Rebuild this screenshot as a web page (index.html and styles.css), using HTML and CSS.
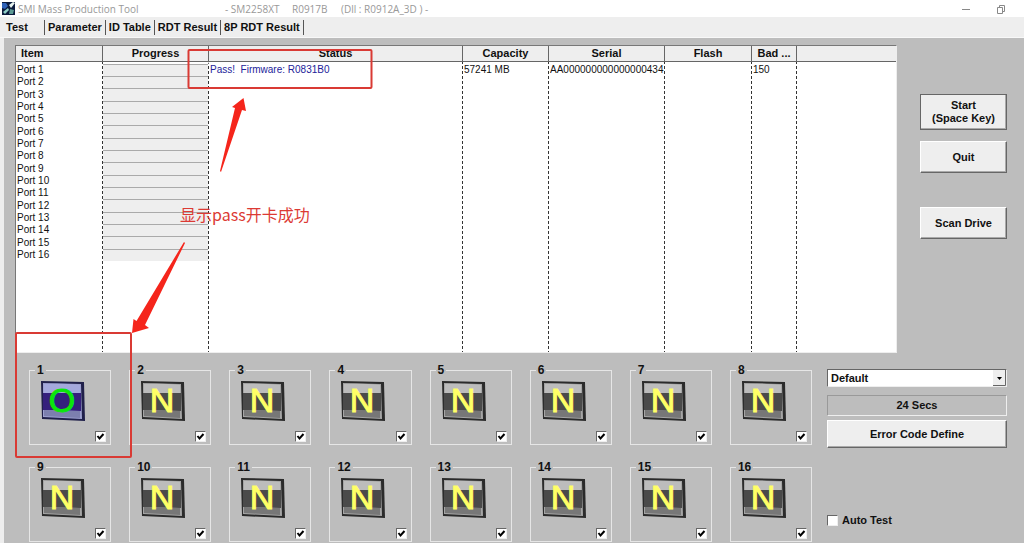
FILE: index.html
```html
<!DOCTYPE html>
<html lang="en">
<head>
    <meta charset="UTF-8">
    <meta name="viewport" content="width=device-width, initial-scale=1.0">
    <title>SMI Mass Production Tool</title>
    <link rel="stylesheet" href="styles.css">
</head>
<body>
    <div class="titlebar">
        <svg class="app-icon" viewBox="0 0 13 13">
            <rect width="13" height="13" fill="#0b1a3c"/>
            <path d="M0 1h4l2 3-3 3-3-1z" fill="#2f62b8"/>
            <path d="M7 3l4-3 2 1-4 5z" fill="#e8f4f0"/>
            <path d="M1 10l5-4 1 2-4 4z" fill="#8fd0c8"/>
            <path d="M8 7l4 1-1 4-4 0z" fill="#5c9a94"/>
        </svg>
        <span class="app-name">SMI Mass Production Tool</span>
        <span class="chip">- SM2258XT</span>
        <span class="version">R0917B</span>
        <span class="dll">(Dll : R0912A_3D ) -</span>
        <svg class="window-icons" viewBox="0 0 44 10" fill="none" stroke="#888">
            <path d="M0 5.500h8"/>
            <path d="M35.500 3.500h5v6h-5zM37.500 3.500v-2h5v6h-2"/>
        </svg>
    </div>

    <nav class="tabs">
        <button class="tab active">Test</button>
        <button class="tab">Parameter</button>
        <button class="tab">ID Table</button>
        <button class="tab">RDT Result</button>
        <button class="tab">8P RDT Result</button>
    </nav>

    <main class="panel">
        <div class="top">
            <div class="list">
                <table class="ports">
                    <colgroup>
                        <col class="col-item">
                        <col class="col-progress">
                        <col class="col-status">
                        <col class="col-capacity">
                        <col class="col-serial">
                        <col class="col-flash">
                        <col class="col-bad">
                        <col class="col-rest">
                    </colgroup>
                    <thead>
                        <tr>
                            <th class="first">Item</th>
                            <th>Progress</th>
                            <th>Status</th>
                            <th>Capacity</th>
                            <th>Serial</th>
                            <th>Flash</th>
                            <th>Bad ...</th>
                            <th></th>
                        </tr>
                    </thead>
                    <tbody id="ports"></tbody>
                </table>
            </div>
            <div class="actions">
                <button class="btn btn-start">Start<br>(Space Key)</button>
                <button class="btn btn-quit">Quit</button>
                <button class="btn">Scan Drive</button>
            </div>
        </div>

        <div class="bottom">
            <div class="slots" id="slots"></div>
            <div class="controls">
                <select class="config" aria-label="Config">
                    <option>Default</option>
                </select>
                <div class="timer">24 Secs</div>
                <button class="btn btn-error">Error Code Define</button>
                <label class="auto"><input type="checkbox" class="check"> Auto Test</label>
            </div>
        </div>
    </main>

    <svg class="marks" width="400" height="470">
        <g fill="none" stroke="#d93a34" stroke-width="2">
            <rect x="188.500" y="50" width="183" height="38" rx="1"/>
            <rect x="16" y="333" width="115" height="124" rx="1"/>
        </g>
        <g fill="#f5251b">
            <path d="M243.500 98l2.500 13-4-1-21 62-1-1 15-63-3-1z"/>
            <path d="M132 333l1.500-14 3 2 47.500-79 1 1-40 82 4 3z"/>
        </g>
    </svg>
    <div class="note">显示pass开卡成功</div>

    <script>
        // ports list
        const first = ['Pass!&nbsp; Firmware: R0831B0', '57241 MB', 'AA000000000000000434', '', '150', ''];
        let rows = '';
        for (let i = 1; i <= 16; i++) {
            rows += `<tr><td>Port ${i}</td><td class="progress"></td>`;
            for (let c = 0; c < 6; c++) {
                rows += `<td${c === 0 ? ' class="status"' : ''}>${i === 1 ? first[c] : ''}</td>`;
            }
            rows += '</tr>';
        }
        // empty row takes the rest of the height
        rows += `<tr class="filler">${'<td></td>'.repeat(8)}</tr>`;
        document.getElementById('ports').innerHTML = rows;

        // drive slots
        let slots = '';
        for (let i = 1; i <= 16; i++) {
            const state = i === 1 ? 'O' : 'N';
            slots += `
                <fieldset class="slot ${i === 1 ? 'pass' : ''}">
                    <legend>${i}</legend>
                    <label for="slot${i}">
                        <svg class="drive" viewBox="0 0 44 40">
                            <path d="M0 0l43 1 1 39-43-2z" class="case"/>
                            <path d="M2 2l38 1 1 35-39-2z" class="edge"/>
                            <path d="M3 3q18-1 36 1v9H3z" class="glass"/>
                            <path d="M2 12h38v18l-38-1z" class="band"/>
                            <path d="M3 29l36 1v7l-36-2z" class="base"/>
                            <text x="21" y="31" class="letter">${state}</text>
                        </svg>
                    </label>
                    <input type="checkbox" class="check" id="slot${i}" checked>
                </fieldset>`;
        }
        document.getElementById('slots').innerHTML = slots;
    </script>
</body>
</html>
```
FILE: styles.css
```css
* {
    box-sizing: border-box;
}
body {
    margin: 0;
    min-height: 100vh;
    display: flex;
    flex-direction: column;
    position: relative;
    overflow: hidden;
    background-color: #eee;
    font-family: "Liberation Sans", Arial, sans-serif;
    font-size: 11px;
    font-weight: bold;
    color: #111;
}
button, select {
    font: inherit;
    color: inherit;
}
.titlebar {
    display: flex;
    align-items: center;
    height: 17px;
    padding: 0 18px 0 2px;
    background-color: #fff;
    color: #999;
    font-family: "Open Sans", sans-serif;
    font-size: 10px;
    font-weight: normal;
}
.app-icon {
    width: 13px;
    height: 13px;
    margin-right: 3px;
}
.app-name {
    width: 207px;
}
.chip {
    width: 67px;
}
.version {
    width: 49px;
}
.window-icons {
    width: 44px;
    height: 10px;
    margin-left: auto;
}
.tabs {
    display: flex;
    align-items: center;
    height: 21px;
    border-bottom: 1px solid #f8f8f8;
}
.tab {
    height: 15px;
    padding: 0 3px;
    border: none;
    border-right: 1px solid #555;
    background: none;
    line-height: 15px;
}
.tab.active {
    width: 45px;
    padding: 0 0 2px 6px;
    text-align: left;
}
.panel {
    flex: 1;
    margin-left: 4px;
    padding: 7px 17px 0 11px;
    background-color: #bdbdbd;
}
.top {
    display: flex;
    gap: 23px;
}
.list {
    flex: 1;
    height: 308px;
    border: 1px solid #777;
    border-right-color: #eee;
    border-bottom-color: #eee;
    background-color: #fff;
}
.ports {
    width: 100%;
    height: 100%;
    table-layout: fixed;
    border-collapse: separate;
    border-spacing: 0;
}
.ports col {
    background: repeating-linear-gradient(#333 0 3px, #fff 3px 5px) right / 1px 100% no-repeat;
}
.ports .col-item { width: 87px; }
.ports .col-progress { width: 106px; }
.ports .col-capacity { width: 86px; }
.ports .col-serial { width: 116px; }
.ports .col-flash { width: 87px; }
.ports .col-bad { width: 45px; }
.ports .col-rest {
    width: 99px;
    background: none;
}
.ports th {
    height: 16px;
    padding: 0;
    border-right: 1px solid #666;
    border-bottom: 1px solid #666;
    background-color: #eee;
    line-height: 15px;
}
.ports th:last-child {
    border-right: none;
}
.ports th.first {
    padding-left: 5px;
    text-align: left;
}
.ports td {
    height: 12px;
    padding: 0 0 0 1px;
    font-size: 10px;
    font-weight: normal;
    line-height: 12px;
    white-space: nowrap;
}
.ports tr:nth-child(3n) td {
    height: 13px;
}
.ports tbody tr:first-child td {
    height: 14px;
    padding-top: 2px;
}
.ports .filler td {
    height: auto;
}
.ports .progress {
    border-right: 1px solid transparent;
    box-shadow: inset 0 1px #aaa;
    background-color: #eee;
    background-clip: padding-box;
}
.ports tr:first-child .progress {
    border-top: 2px solid #fff;
}
.ports .status {
    color: #22229a;
}
.actions {
    display: flex;
    flex-direction: column;
    width: 87px;
    padding-top: 49px;
}
.btn {
    height: 32px;
    padding: 0;
    border: 1px solid;
    border-color: #fff #666 #666 #fff;
    box-shadow: inset -1px -1px #aaa;
    background-color: #eee;
    line-height: 13px;
}
.btn-start {
    height: 36px;
    margin-bottom: 11px;
    border-color: #666;
}
.btn-quit {
    margin-bottom: 34px;
}
.bottom {
    display: flex;
    gap: 15px;
    padding: 11px 0 0 14px;
}
.slots {
    flex: 1;
    display: grid;
    grid-template-columns: repeat(8, 1fr);
    gap: 16px 18px;
}
.slot {
    min-width: 0;
    height: 81px;
    margin: 0;
    padding: 0 0 0 11px;
    border: 1px solid #e6e6e6;
}
.slot legend {
    margin-left: -6px;
    padding: 0 2px;
    font-size: 12px;
    line-height: 13px;
}
.slot label {
    display: block;
    height: 44px;
    padding-top: 4px;
}
.drive {
    display: block;
    width: 44px;
    height: 40px;
}
.drive .case { fill: #2b2b2b; }
.drive .edge { fill: #a5a5a5; }
.drive .glass { fill: #bcbcbc; }
.drive .band { fill: #4a4a4a; }
.drive .base { fill: #777; }
.drive .letter {
    fill: #ffff66;
    stroke: #ffff66;
    font-size: 34px;
    font-weight: normal;
    text-anchor: middle;
}
.pass .case { fill: #20204a; }
.pass .edge { fill: #9da0d0; }
.pass .glass { fill: #a4a8dc; }
.pass .band { fill: #35207c; }
.pass .base { fill: #7c7fae; }
.pass .letter {
    fill: #0be60b;
    stroke: #0be60b;
}
.check {
    appearance: none;
    width: 11px;
    height: 11px;
    margin: 0;
    border: 1px solid;
    border-color: #666 #eee #eee #666;
    background-color: #fff;
}
.check:checked {
    background-image: url('data:image/svg+xml,<svg xmlns="http://www.w3.org/2000/svg" viewBox="0 0 9 9"><path d="M1.500 4l2 2.500 4-4.500" fill="none" stroke="black" stroke-width="2"/></svg>');
}
.slot .check {
    display: block;
    margin: 10px 4px 0 auto;
}
.controls {
    display: flex;
    flex-direction: column;
    width: 180px;
    padding-top: 5px;
}
.config {
    appearance: none;
    height: 18px;
    padding: 0 3px;
    border: 1px solid;
    border-color: #666 #eee #eee #666;
    border-radius: 0;
    background: #fff url('data:image/svg+xml,<svg xmlns="http://www.w3.org/2000/svg" viewBox="0 0 13 16"><path d="M0 0h13v16H0z" fill="%23eee"/><path d="M12.500 0v15.500H0" fill="none" stroke="%23666"/><path d="M4 7h5L6.500 10z"/></svg>') right / 13px 16px no-repeat;
}
.timer {
    height: 21px;
    margin: 8px 0 4px;
    border: 1px solid;
    border-color: #999 #eee #eee #999;
    line-height: 19px;
    text-align: center;
}
.btn-error {
    height: 28px;
}
.auto {
    display: flex;
    align-items: center;
    gap: 4px;
    margin-top: 66px;
}
/* red marks over the window */
.marks {
    position: absolute;
    top: 0;
    left: 0;
    pointer-events: none;
}
.note {
    position: absolute;
    top: 203px;
    left: 180px;
    color: #dc3a34;
    font-family: "Noto Sans CJK SC", sans-serif;
    font-size: 16px;
    font-weight: normal;
    line-height: 22px;
}
```
